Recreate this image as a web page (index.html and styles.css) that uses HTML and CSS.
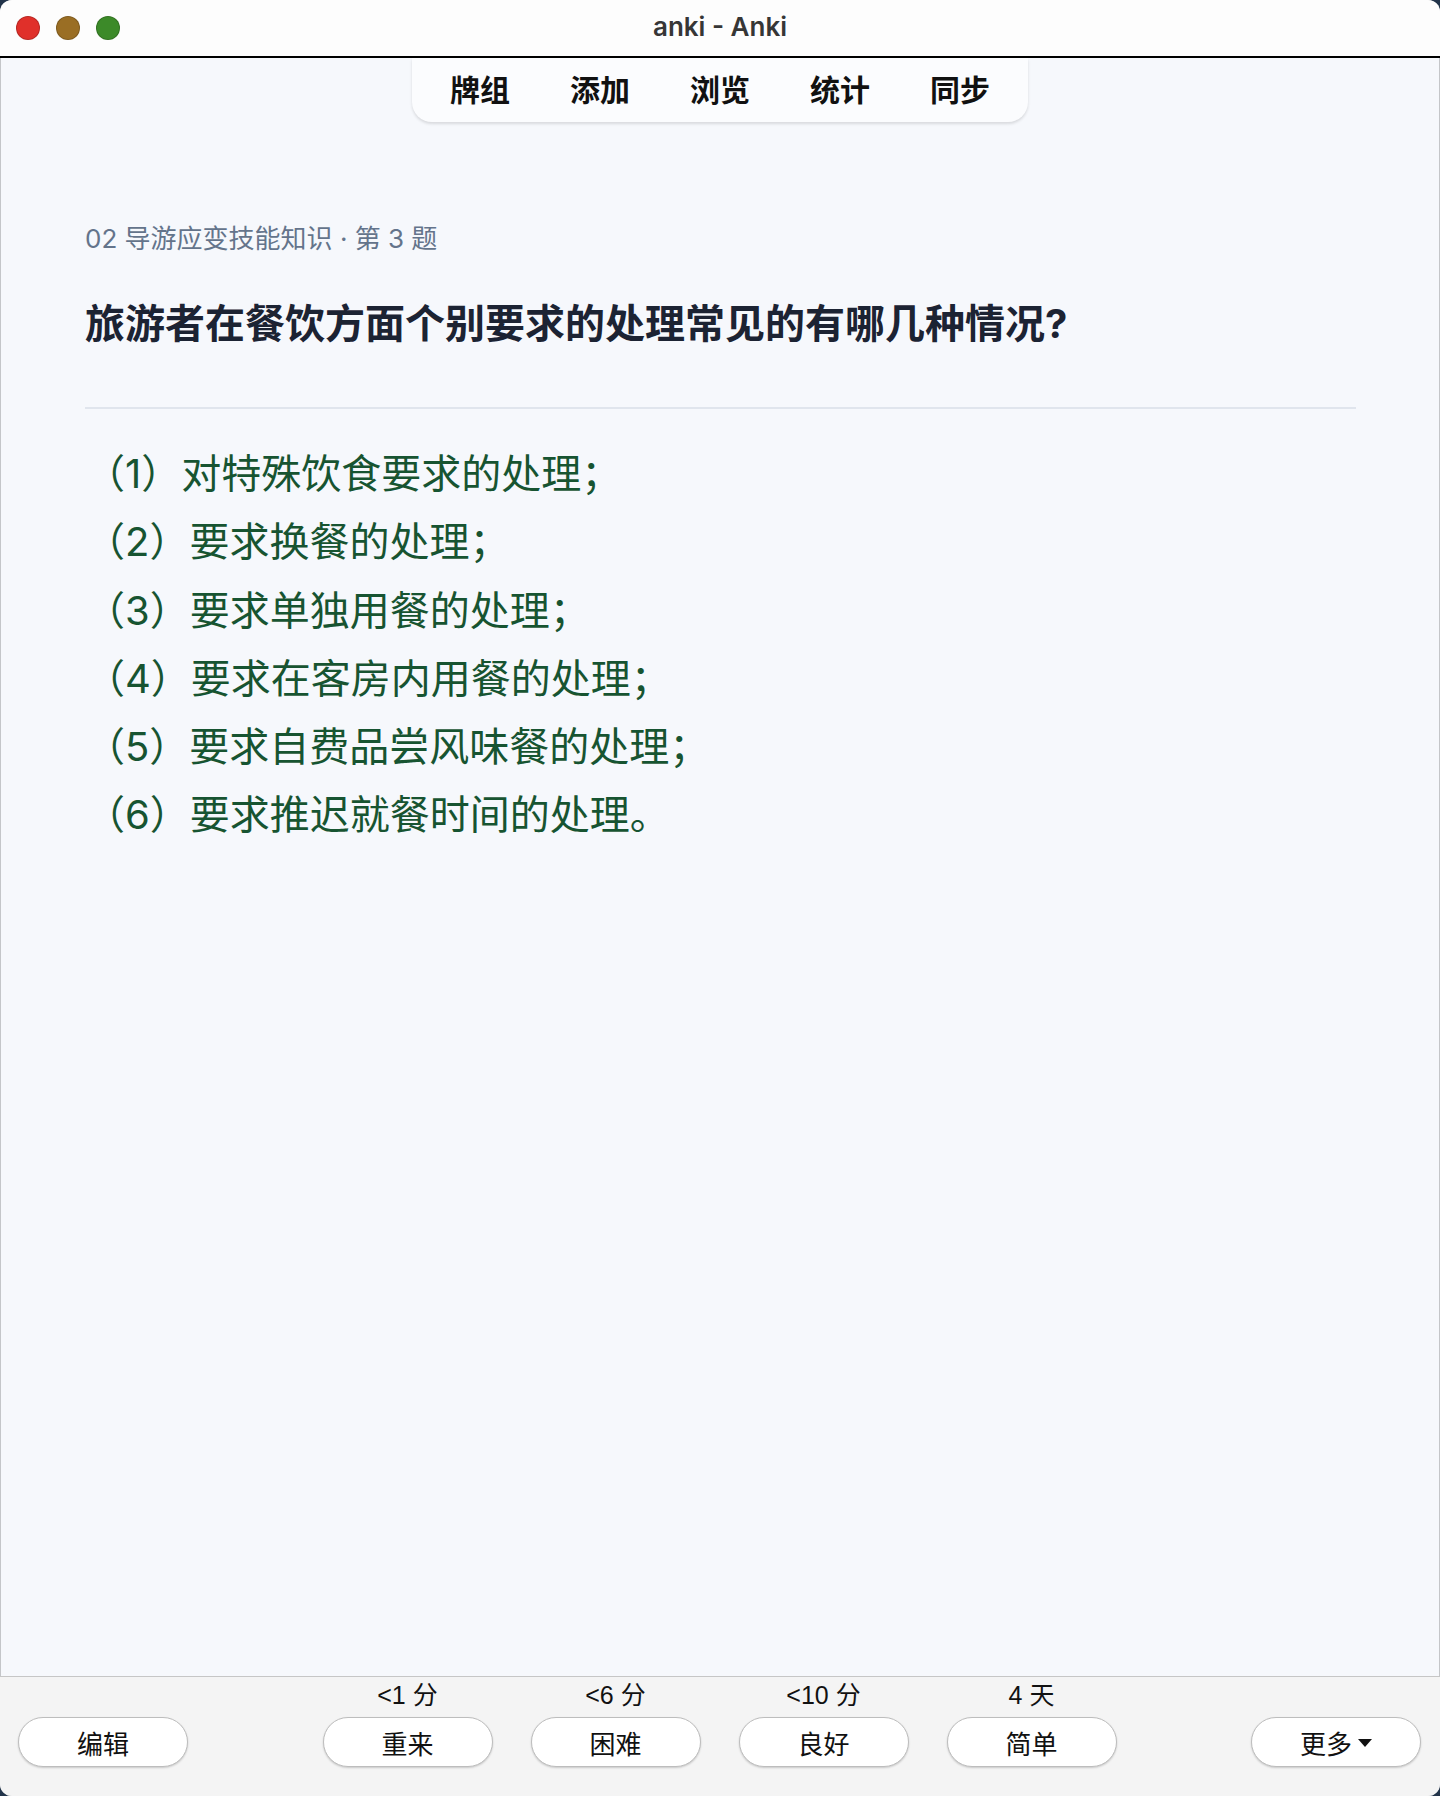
FILE: index.html
```html
<!DOCTYPE html>
<html lang="zh-CN">
<head>
    <meta charset="UTF-8">
    <meta name="viewport" content="width=device-width, initial-scale=1.0">
    <title>anki - Anki</title>
    <link rel="stylesheet" href="styles.css">
</head>
<body>
    <div class="window">
        <header class="titlebar">
            <div class="lights">
                <span class="light red"></span>
                <span class="light amber"></span>
                <span class="light green"></span>
            </div>
            <div class="title">anki - Anki</div>
            <div></div>
        </header>

        <main class="main">
            <nav class="toolbar">
                <a href="#">牌组</a>
                <a href="#">添加</a>
                <a href="#">浏览</a>
                <a href="#">统计</a>
                <a href="#">同步</a>
            </nav>

            <section class="card">
                <div class="deck">02 导游应变技能知识 · 第 3 题</div>
                <h1 class="question">旅游者在餐饮方面个别要求的处理常见的有哪几种情况?</h1>
                <hr class="divider">
                <div class="answer">
                    <div>（1）对特殊饮食要求的处理；</div>
                    <div>（2）要求换餐的处理；</div>
                    <div>（3）要求单独用餐的处理；</div>
                    <div>（4）要求在客房内用餐的处理；</div>
                    <div>（5）要求自费品尝风味餐的处理；</div>
                    <div>（6）要求推迟就餐时间的处理。</div>
                </div>
            </section>
        </main>

        <footer class="bottombar">
            <button class="btn side">编辑</button>
            <div class="ease">
                <div class="ease-item">
                    <span class="due">&lt;1 分</span>
                    <button class="btn">重来</button>
                </div>
                <div class="ease-item">
                    <span class="due">&lt;6 分</span>
                    <button class="btn">困难</button>
                </div>
                <div class="ease-item">
                    <span class="due">&lt;10 分</span>
                    <button class="btn">良好</button>
                </div>
                <div class="ease-item">
                    <span class="due">4 天</span>
                    <button class="btn">简单</button>
                </div>
            </div>
            <button class="btn side more">更多<svg class="caret" width="14" height="8" viewBox="0 0 14 8"><path d="M0 0h14L7 8z" fill="#111"/></svg></button>
        </footer>
    </div>
</body>
</html>
```

FILE: styles.css
```css
body {
    margin: 0;
    background-color: #22344a;
    font-family: Inter, "Noto Sans CJK SC", sans-serif;
}
.window {
    height: 1796px;
    display: flex;
    flex-direction: column;
    border-radius: 12px;
    overflow: hidden;
    background-color: #f6f8fc;
    box-shadow: inset 0 0 0 1px rgba(0,0,0,0.2);
}

/* title bar */
.titlebar {
    height: 56px;
    flex-shrink: 0;
    display: grid;
    grid-template-columns: 1fr auto 1fr;
    align-items: center;
    background-color: #fdfdfd;
    border-bottom: 2px solid #000;
}
.lights {
    display: flex;
    gap: 16px;
    padding-left: 16px;
}
.light {
    width: 22px;
    height: 22px;
    border-radius: 50%;
    border: 1px solid rgba(0,0,0,0.18);
}
.red { background-color: #e0302a; }
.amber { background-color: #9a6e24; }
.green { background-color: #3c8a29; }
.title {
    margin-bottom: 4px;
    font-size: 26px;
    font-weight: 600;
    color: #363636;
}

/* main area */
.main {
    flex: 1;
    display: flex;
    flex-direction: column;
}
.toolbar {
    align-self: center;
    display: flex;
    padding: 0 8px;
    background-color: #fbfcfe;
    border-radius: 0 0 20px 20px;
    box-shadow: 0 2px 3px rgba(0,0,0,0.12);
}
.toolbar a {
    padding: 0 30px;
    line-height: 64px;
    font-size: 30px;
    font-weight: 700;
    color: #111;
    text-decoration: none;
}
.card {
    padding: 99px 84px 0 85px;
}
.deck {
    font-size: 26px;
    line-height: 36px;
    color: #64748b;
}
.question {
    margin: 39px 0 0;
    font-size: 40px;
    line-height: 56px;
    font-weight: 700;
    color: #1c2333;
}
.divider {
    margin: 55px 0 0;
    height: 2px;
    border: none;
    background-color: #e0e5ed;
}
.answer {
    margin-top: 31px;
    font-size: 40px;
    line-height: 68.3px;
    color: #175431;
}

/* bottom bar */
.bottombar {
    flex-shrink: 0;
    display: grid;
    grid-template-columns: 1fr auto 1fr;
    align-items: end;
    padding: 4px 19px 29px 18px;
    background-color: #f4f4f4;
    border-top: 1px solid #c6c6c6;
    font-family: "Liberation Sans", "Noto Sans CJK SC", sans-serif;
}
.ease {
    display: flex;
    gap: 38px;
}
.ease-item {
    display: flex;
    flex-direction: column;
    align-items: center;
    gap: 8px;
}
.due {
    font-size: 25px;
    line-height: 28px;
    color: #111;
}
.btn {
    width: 170px;
    height: 50px;
    border: 1.5px solid #bdbdbd;
    border-radius: 25px;
    background-color: #fff;
    box-shadow: 0 1px 2px rgba(0,0,0,0.18);
    font-family: "Liberation Sans", "Noto Sans CJK SC", sans-serif;
    font-size: 26px;
    color: #111;
    padding: 0;
}
.side {
    justify-self: start;
}
.more {
    justify-self: end;
    display: flex;
    align-items: center;
    justify-content: center;
    gap: 6px;
}
.caret {
    margin-top: 2px;
}
```
